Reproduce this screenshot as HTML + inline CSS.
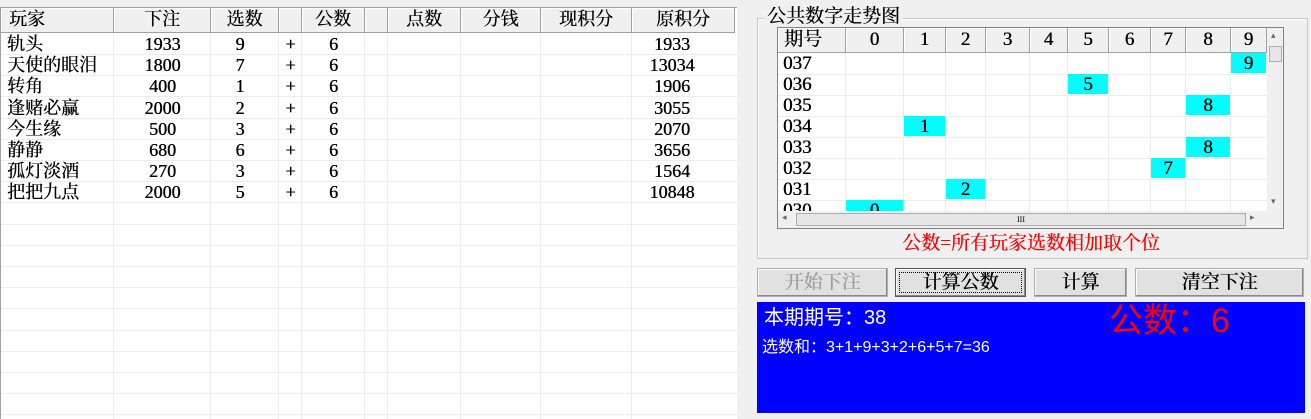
<!DOCTYPE html>
<html><head><meta charset="utf-8"><style>
*{margin:0;padding:0;box-sizing:border-box}
body{width:1311px;height:419px;background:#f0f0f0;position:relative;overflow:hidden;font-family:"Liberation Serif","Noto Serif CJK SC",serif;font-size:18px;color:#000}
.a{position:absolute}
.hl{position:absolute;height:1px;background:#ececec}
.vl{position:absolute;width:1px;background:#ececec}
.hdr{position:absolute;background:#f0f0f0;border-right:1px solid #a0a0a0;border-bottom:1px solid #a0a0a0;text-align:center;line-height:23px;box-shadow:inset 1px 1px 0 #fff;text-shadow:0.4px 0 0 #000}
.c{position:absolute;text-align:center;line-height:21px;text-shadow:0.4px 0 0 #000}
.btn{position:absolute;background:#e1e1e1;border:1px solid #adadad;box-shadow:inset -1px -1px 0 #888,inset 1px 1px 0 #fff;text-align:center;line-height:28px;font-family:"Liberation Serif","Noto Serif CJK SC",serif;font-size:19px;text-shadow:0.5px 0 0 currentColor}
.cy{position:absolute;background:#00ffff;text-align:center;line-height:21px;text-shadow:0.4px 0 0 #000}
</style></head><body>
<div class="a" style="left:0;top:7px;width:737px;height:412px;background:#fff;border-top:1px solid #a0a0a0;border-left:1px solid #a0a0a0;overflow:hidden" id="L"></div>
<div class="a" style="left:757px;top:18px;width:551px;height:241px;border:1px solid #c8c8c8;box-shadow:inset 1px 1px 0 #fff"></div>
<div class="a" style="left:764px;top:5px;padding:0 3px;background:#f0f0f0;font-size:19px;line-height:24px;text-shadow:0.4px 0 0 #000">公共数字走势图</div>
<div class="a" style="left:777px;top:27px;width:507px;height:202px;background:#fff;border:1px solid #828282;overflow:hidden" id="R"></div>
<div class="a" style="left:757px;top:232px;width:548px;text-align:center;color:#f00;font-size:19px;line-height:24px;text-shadow:0.4px 0 0 #f00">公数=所有玩家选数相加取个位</div>
<div class="btn" style="left:757px;top:268px;width:131px;height:29px;color:#a0a0a0">开始下注</div>
<div class="btn" style="left:895px;top:268px;width:131px;height:29px;border:1px solid #555;outline:1px dotted #000;outline-offset:-5px">计算公数</div>
<div class="btn" style="left:1034px;top:268px;width:93px;height:29px">计算</div>
<div class="btn" style="left:1135px;top:268px;width:169px;height:29px">清空下注</div>
<div class="a" style="left:757px;top:302px;width:548px;height:111px;background:#0000ff;font-family:'Liberation Sans','Noto Sans CJK SC',sans-serif;color:#fff">
<div class="a" style="left:7px;top:2px;font-size:20px;line-height:28px">本期期号：38</div>
<div class="a" style="left:5px;top:35px;font-size:16px;line-height:22px">选数和：3+1+9+3+2+6+5+7=36</div>
<div class="a" style="left:352px;top:-2px;font-size:34px;line-height:42px;color:#f00">公数：6</div>
</div>
<script>
var L=document.getElementById('L'),h='';
var xs=[0,113,210,278,301,364,387,460,540,631,734];
var hd=['玩家','下注','选数','','公数','','点数','分钱','现积分','原积分'];
for(var i=0;i<10;i++){var al=i==0?'text-align:left;padding-left:8px;':'';h+='<div class="hdr" style="'+al+'left:'+xs[i]+'px;top:0;width:'+(xs[i+1]-xs[i])+'px;height:25px">'+hd[i]+'</div>';}
for(var y=25+21;y<412;y+=21.2)h+='<div class="hl" style="left:0;width:736px;top:'+Math.round(y)+'px"></div>';
for(var i=1;i<10;i++)h+='<div class="vl" style="left:'+(xs[i]-1)+'px;top:25px;height:400px"></div>';
var d=[['轨头',1933,9,1933],['天使的眼泪',1800,7,13034],['转角',400,1,1906],['逢赌必赢',2000,2,3055],['今生缘',500,3,2070],['静静',680,6,3656],['孤灯淡酒',270,3,1564],['把把九点',2000,5,10848]];
d.forEach(function(r,k){var t=26+k*21.2;
h+='<div class="c" style="left:6px;top:'+t+'px;text-align:left">'+r[0]+'</div>';
h+='<div class="c" style="left:113px;width:97px;top:'+t+'px">'+r[1]+'</div>';
h+='<div class="c" style="left:210px;width:58px;top:'+t+'px">'+r[2]+'</div>';
h+='<div class="c" style="left:278px;width:23px;top:'+t+'px">+</div>';
h+='<div class="c" style="left:301px;width:63px;top:'+t+'px">6</div>';
h+='<div class="c" style="left:631px;width:80px;top:'+t+'px">'+r[3]+'</div>';});
L.innerHTML=h;
var R=document.getElementById('R');h='';
var rx=[0,68,126,168,208,252,290,331,373,408,453,489];
var rh=['期号','0','1','2','3','4','5','6','7','8','9'];
for(var i=0;i<11;i++){var al=i==0?'text-align:left;padding-left:6px;':'';h+='<div class="hdr" style="'+al+'left:'+rx[i]+'px;top:0;width:'+(rx[i+1]-rx[i])+'px;height:25px;font-size:19px">'+rh[i]+'</div>';}
for(var k=0;k<8;k++){var t=25+k*21;h+='<div class="hl" style="left:0;width:489px;top:'+(t+21)+'px"></div>';}
for(var i=1;i<11;i++)h+='<div class="vl" style="left:'+(rx[i]-1)+'px;top:25px;height:160px"></div>';
var per=['037','036','035','034','033','032','031','030'],hit=[9,5,8,1,8,7,2,0];
per.forEach(function(p,k){var t=25+k*21;
h+='<div class="c" style="left:5px;top:'+t+'px;font-size:19px">'+p+'</div>';
var c=hit[k]+1;h+='<div class="cy" style="left:'+rx[c]+'px;width:'+(rx[c+1]-rx[c]-1)+'px;top:'+t+'px;height:20px;font-size:19px">'+hit[k]+'</div>';});
h+='<div class="a" style="left:0;top:183px;width:505px;height:17px;background:#f0f0f0"></div>';
h+='<div class="a" style="left:18px;top:185px;width:450px;height:13px;background:#e6e6e6;border:1px solid #adadad;text-align:center;font-size:8px;line-height:11px">III</div>';
h+='<div class="a" style="left:4px;top:184px;font-size:9px;color:#666">◂</div><div class="a" style="left:472px;top:184px;font-size:9px;color:#666">▸</div>';
h+='<div class="a" style="left:489px;top:0;width:17px;height:183px;background:#f0f0f0"></div>';
h+='<div class="a" style="left:491px;top:18px;width:13px;height:16px;background:#e6e6e6;border:1px solid #adadad"></div>';
h+='<div class="a" style="left:493px;top:2px;font-size:9px;color:#666">▴</div><div class="a" style="left:493px;top:168px;font-size:9px;color:#666">▾</div>';
R.innerHTML=h;
</script>
</body></html>
